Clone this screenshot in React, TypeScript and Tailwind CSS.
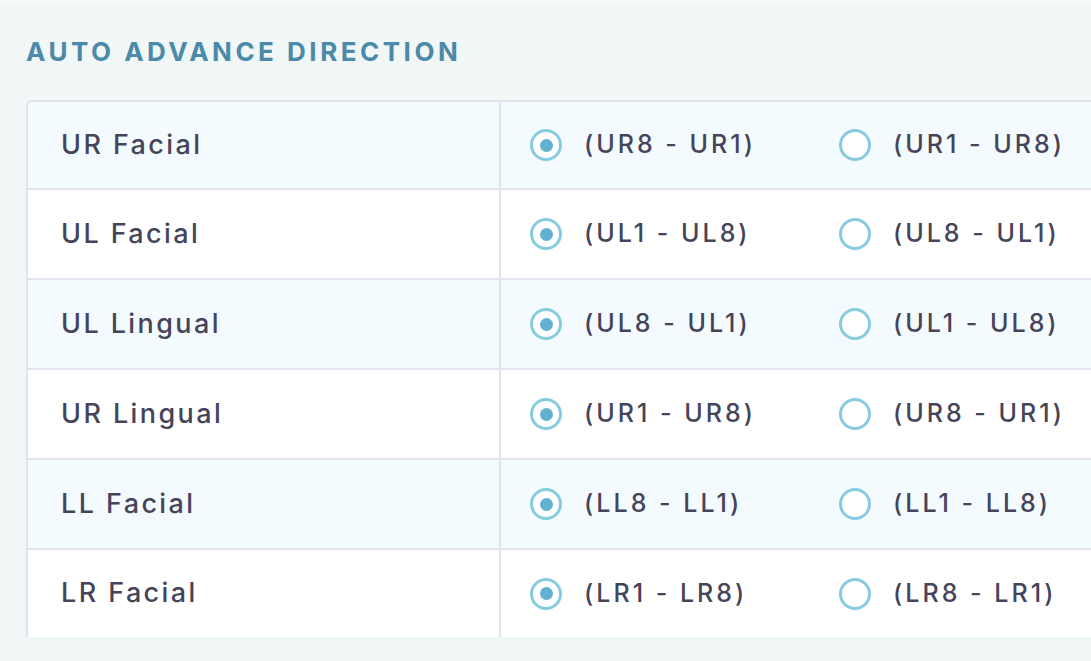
const rows = [
  { label: "UR Facial", a: "(UR8 - UR1)", b: "(UR1 - UR8)" },
  { label: "UL Facial", a: "(UL1 - UL8)", b: "(UL8 - UL1)" },
  { label: "UL Lingual", a: "(UL8 - UL1)", b: "(UL1 - UL8)" },
  { label: "UR Lingual", a: "(UR1 - UR8)", b: "(UR8 - UR1)" },
  { label: "LL Facial", a: "(LL8 - LL1)", b: "(LL1 - LL8)" },
  { label: "LR Facial", a: "(LR1 - LR8)", b: "(LR8 - LR1)" },
];

const rowHeights = ["h-[88px]", "h-[90px]", "h-[90px]", "h-[90px]", "h-[90px]", "h-[87px]"];

function Radio({ checked, label }: { checked: boolean; label: string }) {
  return (
    <label className="flex items-center w-[309px] shrink-0 cursor-pointer">
      <span className="w-[32px] h-[32px] rounded-full border-[3px] border-[#86cbe0] bg-white flex items-center justify-center">
        {checked && <span className="w-[13px] h-[13px] rounded-full bg-[#62b1d0]" />}
      </span>
      <span className="ml-[22px] text-[25px] text-[#45445a] font-medium tracking-[3px]">{label}</span>
    </label>
  );
}

export default function App() {
  return (
    <div
      className="w-[1091px] h-[661px] overflow-hidden bg-[#f1f6f6] border-t-[3px] border-[#f7f9f9]"
      style={{ fontFamily: 'Inter, "Noto Sans", sans-serif' }}
    >
      <div className="pl-[26px] pt-[32px]">
        <h2 className="text-[26px] leading-[34px] font-bold text-[#4b8aa8] tracking-[3.5px]">
          AUTO ADVANCE DIRECTION
        </h2>

        <div className="mt-[31px] w-[1100px] rounded-tl-[7px] border-l-2 border-t-2 border-[#e3e3ed] overflow-hidden">
          {rows.map((r, i) => (
            <div
              key={r.label}
              className={`flex ${rowHeights[i]} ${i < rows.length - 1 ? "border-b-[2px] border-[#e3e3ed]" : ""} ${i % 2 === 0 ? "bg-[#f4fbfe]" : "bg-white"}`}
            >
              <div className="w-[473px] shrink-0 border-r-2 border-[#e3e3ed] flex items-center pl-[33px] text-[27px] font-medium tracking-[2.4px] text-[#45445a]">
                {r.label}
              </div>
              <div className="flex items-center pl-[29px]">
                <Radio checked label={r.a} />
                <Radio checked={false} label={r.b} />
              </div>
            </div>
          ))}
        </div>
      </div>
    </div>
  );
}
